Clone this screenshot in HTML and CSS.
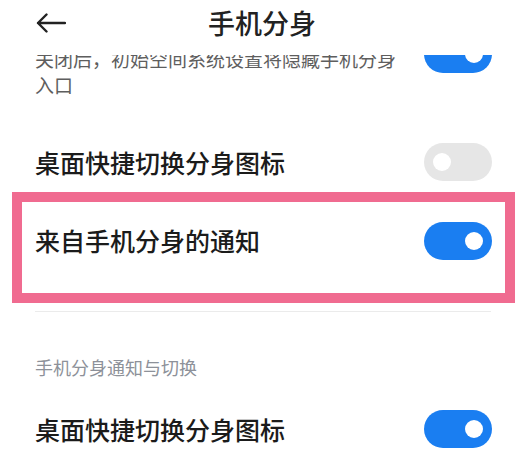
FILE: index.html
```html
<!DOCTYPE html>
<html lang="zh-CN">
<head>
<meta charset="utf-8">
<title>手机分身</title>
<link rel="stylesheet" href="styles.css">
</head>
<body>
<div class="screen">
  <header class="header">
    <div class="back">
      <svg width="30" height="20" viewBox="0 0 30 20" aria-hidden="true">
        <path d="M29 10 H2 M10.5 1.5 L2 10 L10.5 18.5" fill="none" stroke="#222" stroke-width="2.4" stroke-linecap="round" stroke-linejoin="round"/>
      </svg>
    </div>
    <h1 class="title">手机分身</h1>
    <div></div>
  </header>
  <main class="content">
    <div class="row row-first">
      <p class="desc">关闭后，初始空间系统设置将隐藏手机分身<br>入口</p>
      <span class="switch on"></span>
    </div>
    <div class="row row-second">
      <span class="label">桌面快捷切换分身图标</span>
      <span class="switch off"></span>
    </div>
    <div class="highlight">
      <div class="row row-inner">
        <span class="label">来自手机分身的通知</span>
        <span class="switch on"></span>
      </div>
    </div>
    <div class="divider"></div>
    <div class="section-title">手机分身通知与切换</div>
    <div class="row row-last">
      <span class="label">桌面快捷切换分身图标</span>
      <span class="switch on"></span>
    </div>
  </main>
</div>
</body>
</html>
```

FILE: styles.css
```css
* { box-sizing: border-box; }
html, body {
  margin: 0;
  padding: 0;
  background: #fff;
}
body {
  font-family: "Noto Sans CJK SC", "Noto Sans", sans-serif;
  color: #1b1b1b;
}
.screen {
  width: 524px;
  height: 456px;
  overflow: hidden;
  display: flex;
  flex-direction: column;
}
.header {
  height: 55px;
  flex: none;
  display: grid;
  grid-template-columns: 1fr auto 1fr;
  align-items: start;
  padding-top: 5px;
  background: #fff;
}
.back {
  height: 35px;
  display: flex;
  align-items: center;
  padding-left: 36px;
}
.back svg { display: block; }
.title {
  margin: 0;
  font-size: 27px;
  line-height: 35px;
  font-weight: 500;
  color: #222;
}
.content {
  flex: 1;
  overflow: hidden;
}
.row {
  display: flex;
  justify-content: space-between;
  padding: 0 32px 0 35px;
}
.row-first {
  margin-top: -20px;
  align-items: flex-start;
}
.desc {
  margin: 11px 0 0;
  font-size: 19px;
  line-height: 25.5px;
  color: #5e5e5e;
}
.row-second {
  align-items: center;
  padding-top: 46px;
  padding-bottom: 11px;
}
.label {
  font-size: 25px;
  line-height: 34px;
  font-weight: 500;
  color: #1b1b1b;
}
.highlight {
  margin: 0 9px 0 12px;
  border: 10px solid #f06b90;
}
.row-inner {
  align-items: center;
  padding: 20px 13px 33px 13px;
}
.row-inner .label { margin-top: -2px; }
.divider {
  margin: 8px 33px 0 35px;
  height: 1px;
  background: #ebebeb;
}
.section-title {
  margin-top: 43px;
  padding-left: 35px;
  font-size: 18px;
  line-height: 24px;
  color: #8d9199;
}
.row-last {
  margin-top: 31px;
  align-items: center;
}
.switch {
  flex: none;
  width: 68px;
  height: 38px;
  border-radius: 19px;
  display: flex;
  align-items: center;
  padding: 0 9px;
}
.switch::after {
  content: "";
  width: 18px;
  height: 18px;
  border-radius: 50%;
  background: #fff;
}
.switch.on {
  background: #1a7ef1;
  justify-content: flex-end;
}
.switch.off {
  background: #e6e6e6;
  justify-content: flex-start;
}
```
